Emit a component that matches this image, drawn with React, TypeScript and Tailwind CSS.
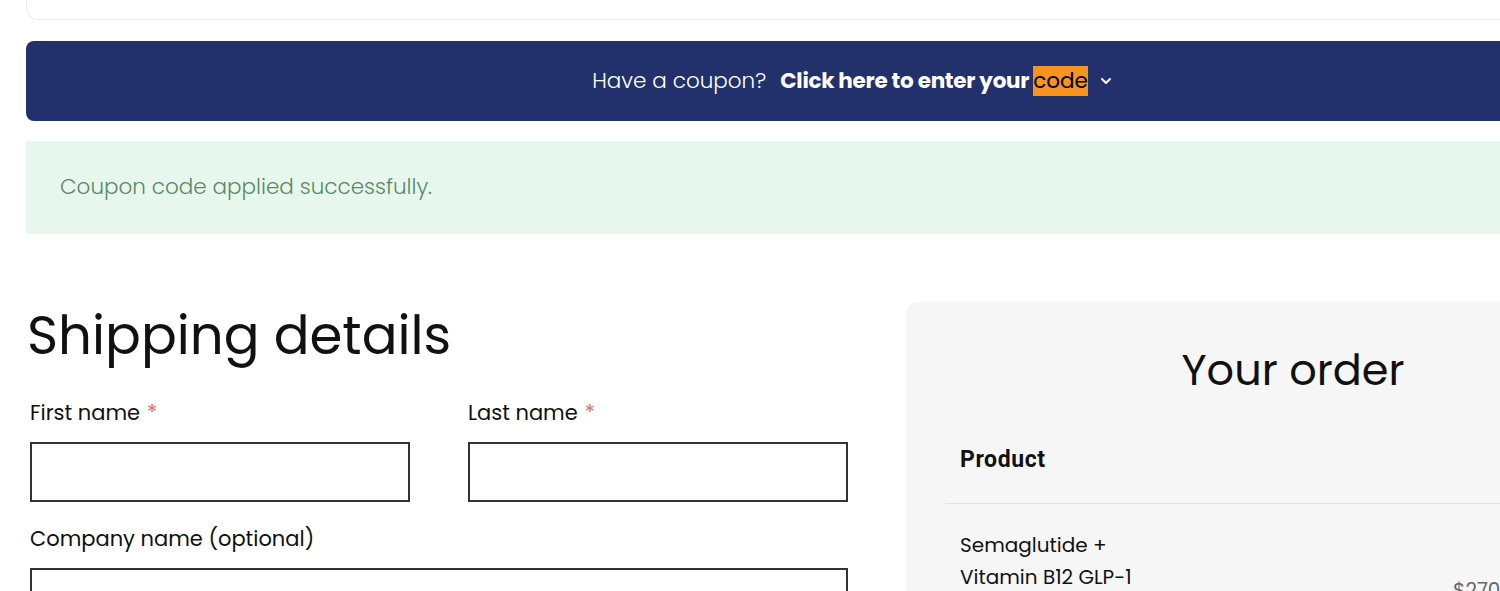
import { ChevronDown } from "lucide-react";

const font = { fontFamily: "Poppins, 'Noto Sans', 'Open Sans', sans-serif" };

function Field({ label, required, className = "" }: { label: string; required?: boolean; className?: string }) {
  return (
    <div className={className}>
      <label className="block text-[21px] leading-[28px] text-[#111]">
        {label}
        {required && <span className="ml-[7px] text-[#f06a6a]">*</span>}
      </label>
      <div className="mt-[15px] h-[60px] border-2 border-[#333] bg-white" />
    </div>
  );
}

export default function App() {
  return (
    <div className="h-[591px] w-[1500px] overflow-hidden bg-white" style={font}>
      <div className="w-[1680px] pl-[26px]">
        <div className="h-[20px] rounded-b-xl border border-t-0 border-[#ececec]" />

        <div className="mt-[21px] flex h-[80px] items-center justify-center rounded-lg bg-[#22316b] text-[21.5px] text-white">
          <span className="font-light">Have a coupon?</span>
          <span className="ml-[14px] font-bold tracking-[-0.3px]">Click here to enter your</span>
          <span className="ml-[4px] bg-[#f7931e] py-[2px] leading-[26px] text-black">code</span>
          <ChevronDown className="ml-[10px] h-4 w-4" strokeWidth={3} />
        </div>

        <div className="mt-[20px] flex h-[93px] items-center bg-[#e8f7ee] px-[34px] text-[21.5px] font-light text-[#5a8a68]">
          Coupon code applied successfully.
        </div>

        <div className="mt-[68px] flex">
          <div className="w-[822px] shrink-0 pl-[1px]">
            <h2 className="mt-[2px] text-[53px] leading-[64px] text-[#111]">Shipping details</h2>
            <div className="mt-[31px] ml-[3px] grid grid-cols-2 gap-x-[58px]">
              <Field label="First name" required />
              <Field label="Last name" required />
            </div>
            <Field label="Company name (optional)" className="mt-[23px] ml-[3px]" />
          </div>

          <div className="ml-[58px] h-[400px] flex-1 rounded-xl bg-[#f6f6f6] px-[39px]">
            <h3 className="mt-[40px] text-center text-[43px] leading-[56px] text-[#111]">Your order</h3>
            <div className="mt-[48px] border-b border-[#e2e2e2] pb-[29px] pl-[15px]">
              <span
                className="text-[23px] font-bold leading-[28px] tracking-[0.6px] text-[#111]"
                style={{ fontFamily: "Roboto, 'Liberation Sans', sans-serif" }}
              >
                Product
              </span>
            </div>
            <div className="flex pl-[15px] pt-[25px]">
              <div className="w-[493px] shrink-0 text-[20px] leading-[32px] text-[#111]">
                Semaglutide +<br />
                Vitamin B12 GLP-1
              </div>
              <div className="mt-[46px] text-[20px] leading-[30px] text-[#666]">$270.00</div>
            </div>
          </div>
        </div>
      </div>
    </div>
  );
}
